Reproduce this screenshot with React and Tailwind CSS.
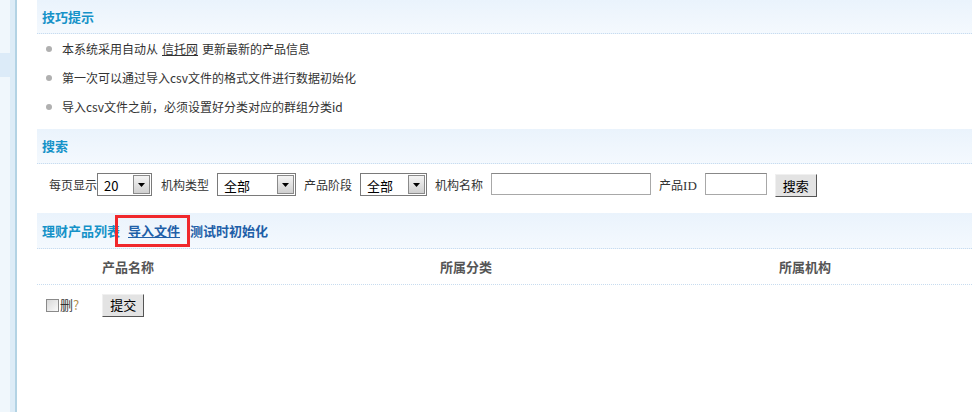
const font = "font-['SimSun','Noto_Sans_CJK_SC',sans-serif]";

const Select = ({ value, width }) => (
  <div className={`flex h-[23px] items-stretch border border-[#7a7a7a] bg-white ${width}`}>
    <span className="flex-1 pl-[6px] pt-[2px] text-[13px] text-[#000]">{value}</span>
    <span className="m-[1px] flex w-[17px] items-center justify-center border border-[#8a8a8a] bg-gradient-to-b from-[#f4f4f4] to-[#d0d0d0]">
      <svg width="7" height="4" viewBox="0 0 7 4"><path d="M0 0h7L3.5 4z" fill="#000" /></svg>
    </span>
  </div>
);

const Header = ({ children, className = "" }) => (
  <div className={`flex items-center border-b border-dotted border-[#c8dcef] bg-gradient-to-b from-[#eaf3fc] to-[#f4f9fe] pl-[5px] text-[13px] font-bold ${className}`}>
    {children}
  </div>
);

const Btn = ({ children, className = "" }) => (
  <button className={`border border-t-[#f0f0f0] border-l-[#f0f0f0] border-r-[#555] border-b-[#555] bg-[#e3e3e3] text-[13px] text-black ${className}`}>
    {children}
  </button>
);

const tips = [
  <>本系统采用自动从<span className="mx-[4px] underline">信托网</span>更新最新的产品信息</>,
  <>第一次可以通过导入csv文件的格式文件进行数据初始化</>,
  <>导入csv文件之前，必须设置好分类对应的群组分类id</>,
];

export default function App() {
  return (
    <div className={`flex h-[412px] w-[972px] overflow-hidden bg-white ${font}`}>
      {/* sidebar strip */}
      <div className="flex w-[10px] flex-col bg-[#f0f7fc]">
        <div className="mt-[53px] h-[24px] bg-[#dcebf8]" />
      </div>
      <div className="w-[5px] bg-[#ddecf7]" />
      <div className="w-[2px] bg-[#b3d3e4]" />

      <div className="flex-1 pl-[20px]">
        <Header className="h-[34px] text-[#1592c8]">技巧提示</Header>
        <ul className="h-[95px] text-[12px] text-[#333]">
          {tips.map((t, i) => (
            <li key={i} className="flex h-[29px] items-center pl-[9px]">
              <span className="mr-[10px] h-[6px] w-[6px] rounded-full bg-[#b0b0b0]" />
              {t}
            </li>
          ))}
        </ul>

        <Header className="h-[35px] text-[#1592c8]">搜索</Header>
        <div className="flex h-[49px] items-start pl-[12px] pt-[9px] text-[12px] text-[#333]">
          <span className="pt-[3px]">每页显示</span>
          <Select value="20" width="w-[55px]" />
          <span className="ml-[9px] mr-[8px] pt-[3px]">机构类型</span>
          <Select value="全部" width="w-[79px]" />
          <span className="ml-[8px] mr-[8px] pt-[3px]">产品阶段</span>
          <Select value="全部" width="w-[67px]" />
          <span className="ml-[8px] mr-[8px] pt-[3px]">机构名称</span>
          <div className="h-[22px] w-[160px] border border-[#a8a8a8] border-t-[#888] bg-white" />
          <span className="ml-[8px] mr-[8px] pt-[3px]">产品<span className="font-['Liberation_Serif',serif] text-[13px]">ID</span></span>
          <div className="h-[22px] w-[62px] border border-[#a8a8a8] border-t-[#888] bg-white" />
          <Btn className="ml-[8px] mt-[1px] h-[23px] w-[42px]">搜索</Btn>
        </div>

        <Header className="h-[36px] text-[#1592c8]">
          <span>理财产品列表</span>
          <span className="ml-[-5px] flex h-[32px] items-center border-[3px] border-[#f0282c] pl-[10px] pr-[7px] text-[#1e5fa8] underline">导入文件</span>
          <span className="text-[#1e5fa8]">测试时初始化</span>
        </Header>

        <div className="flex h-[36px] items-center border-b border-dotted border-[#c8dcef] text-[13px] font-bold text-[#555]">
          <span className="ml-[65px] w-[338px]">产品名称</span>
          <span className="w-[339px]">所属分类</span>
          <span>所属机构</span>
        </div>

        <div className="flex h-[40px] items-center text-[13px] text-[#333]">
          <span className="ml-[9px] h-[13px] w-[13px] border border-[#8a8a8a] bg-gradient-to-br from-[#d8d8d8] to-[#fafafa]" />
          <span className="ml-[1px]">删<span className="text-[#b09050]">?</span></span>
          <Btn className="ml-[23px] h-[23px] w-[42px]">提交</Btn>
        </div>
      </div>
    </div>
  );
}
